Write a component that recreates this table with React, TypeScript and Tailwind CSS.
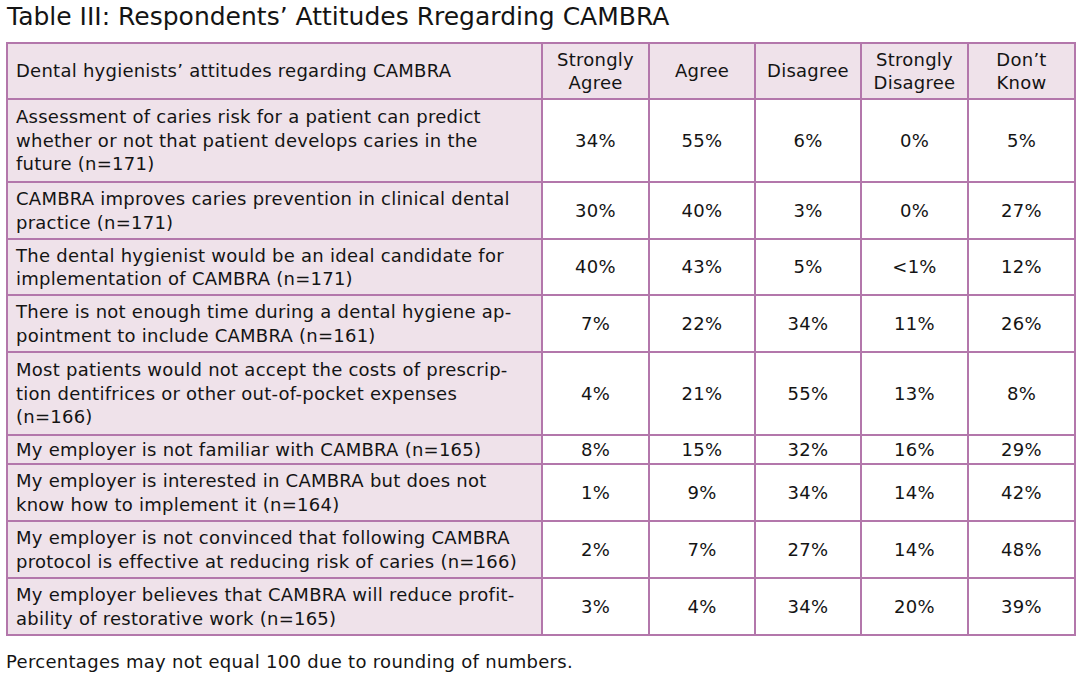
const headers = [
  ["Strongly", "Agree"],
  ["Agree"],
  ["Disagree"],
  ["Strongly", "Disagree"],
  ["Don’t", "Know"],
];

type Row = { label: string[]; values: string[]; height: string };

const rows: Row[] = [
  {
    label: [
      "Assessment of caries risk for a patient can predict",
      "whether or not that patient develops caries in the",
      "future (n=171)",
    ],
    values: ["34%", "55%", "6%", "0%", "5%"],
    height: "h-[83px]",
  },
  {
    label: ["CAMBRA improves caries prevention in clinical dental", "practice (n=171)"],
    values: ["30%", "40%", "3%", "0%", "27%"],
    height: "h-[57px]",
  },
  {
    label: ["The dental hygienist would be an ideal candidate for", "implementation of CAMBRA (n=171)"],
    values: ["40%", "43%", "5%", "<1%", "12%"],
    height: "h-[56px]",
  },
  {
    label: ["There is not enough time during a dental hygiene ap-", "pointment to include CAMBRA (n=161)"],
    values: ["7%", "22%", "34%", "11%", "26%"],
    height: "h-[57px]",
  },
  {
    label: [
      "Most patients would not accept the costs of prescrip-",
      "tion dentifrices or other out-of-pocket expenses",
      "(n=166)",
    ],
    values: ["4%", "21%", "55%", "13%", "8%"],
    height: "h-[83px]",
  },
  {
    label: ["My employer is not familiar with CAMBRA (n=165)"],
    values: ["8%", "15%", "32%", "16%", "29%"],
    height: "h-[29px]",
  },
  {
    label: ["My employer is interested in CAMBRA but does not", "know how to implement it (n=164)"],
    values: ["1%", "9%", "34%", "14%", "42%"],
    height: "h-[57px]",
  },
  {
    label: ["My employer is not convinced that following CAMBRA", "protocol is effective at reducing risk of caries (n=166)"],
    values: ["2%", "7%", "27%", "14%", "48%"],
    height: "h-[57px]",
  },
  {
    label: ["My employer believes that CAMBRA will reduce profit-", "ability of restorative work (n=165)"],
    values: ["3%", "4%", "34%", "20%", "39%"],
    height: "h-[57px]",
  },
];

export default function App() {
  return (
    <div className="w-[1083px] h-[679px] bg-white text-[#141414] font-['DejaVu_Sans',sans-serif]">
      {/* Title */}
      <div className="pl-[7px] pt-[1px] h-[42px] text-[25px] leading-[32px] tracking-[0px]">
        Table III: Respondents’ Attitudes Rregarding CAMBRA
      </div>

      <table className="ml-[6px] w-[1068px] table-fixed border-collapse text-[18px] leading-[23.5px] tracking-[0.25px]">
        <colgroup>
          <col className="w-[535px]" />
          <col className="w-[107px]" />
          <col className="w-[106px]" />
          <col className="w-[106px]" />
          <col className="w-[107px]" />
          <col className="w-[107px]" />
        </colgroup>
        <thead>
          <tr className="h-[56px] bg-[#efe2ea]">
            <th className="border-2 border-[#b377ab] px-[8px] text-left font-normal align-middle">
              Dental hygienists’ attitudes regarding CAMBRA
            </th>
            {headers.map((h, i) => (
              <th key={i} className="border-2 border-[#b377ab] px-1 text-center font-normal align-middle">
                {h.map((line, j) => (
                  <div key={j}>{line}</div>
                ))}
              </th>
            ))}
          </tr>
        </thead>
        <tbody>
          {rows.map((row, i) => (
            <tr key={i} className={row.height}>
              <td className="border-2 border-[#b377ab] bg-[#efe2ea] px-[8px] py-0 align-middle whitespace-nowrap">
                {row.label.map((line, j) => (
                  <div key={j}>{line}</div>
                ))}
              </td>
              {row.values.map((v, j) => (
                <td key={j} className="border-2 border-[#b377ab] bg-white text-center py-0 align-middle">
                  {v}
                </td>
              ))}
            </tr>
          ))}
        </tbody>
      </table>

      <div className="pl-[6px] pt-[14px] text-[18px] leading-[24px] tracking-[0.3px]">
        Percentages may not equal 100 due to rounding of numbers.
      </div>
    </div>
  );
}
